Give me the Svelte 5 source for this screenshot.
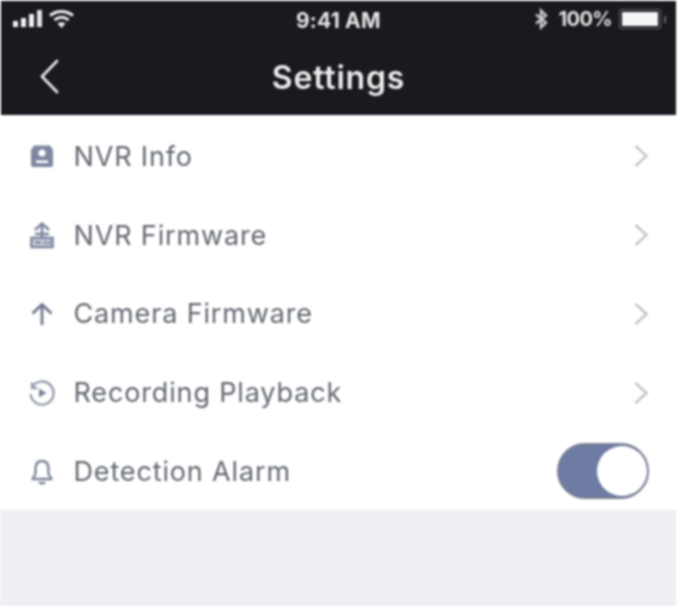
<script>
  const rows = [
    { label: 'NVR Info', icon: 'info' },
    { label: 'NVR Firmware', icon: 'firmware' },
    { label: 'Camera Firmware', icon: 'up' },
    { label: 'Recording Playback', icon: 'playback' },
    { label: 'Detection Alarm', icon: 'bell' }
  ];
</script>

<div class="screen">
  <header class="header">
    <div class="status">
      <div class="status-left">
        <svg width="31" height="18" viewBox="0 0 31 18">
          <rect x="0" y="11" width="5" height="6" fill="#f2f2f2"/>
          <rect x="8" y="8" width="5" height="9" fill="#f2f2f2"/>
          <rect x="16" y="4" width="5" height="13" fill="#f2f2f2"/>
          <rect x="24" y="0" width="5" height="17" fill="#e4e4e4"/>
        </svg>
        <svg class="wifi" width="29" height="20" viewBox="0 0 29 20" fill="none" stroke="#eee" stroke-width="3">
          <path d="M2 6.5 C9 1 18 1 25 6.5"/>
          <path d="M6.5 11 C11 7.5 16 7.5 20.5 11"/>
          <path d="M13.5 19 L9.5 14.5 C12 12.8 15 12.8 17.5 14.5 Z" fill="#eee" stroke="none"/>
        </svg>
      </div>
      <span class="time">9:41 AM</span>
      <div class="status-right">
        <svg width="14" height="22" viewBox="0 0 14 22" fill="none" stroke="#ccc" stroke-width="2.4">
          <path d="M2 6.5 L12 14.5 L7 19.5 V2.5 L12 7.5 L2 15.5"/>
        </svg>
        <span class="pct">100%</span>
        <div class="battery"><div class="fill"></div></div>
        <div class="nub"></div>
      </div>
    </div>
    <div class="nav">
      <svg class="back" width="22" height="36" viewBox="0 0 22 36" fill="none" stroke="#e8e8e8" stroke-width="2.8" stroke-linecap="round" stroke-linejoin="round">
        <path d="M18 2 L3 17.5 L18 33"/>
      </svg>
      <h1>Settings</h1>
    </div>
  </header>

  <main class="list">
    {#each rows as row}
      <div class="row">
        <span class="icon">
          {#if row.icon === 'info'}
            <svg width="26" height="26" viewBox="0 0 26 26">
              <path fill-rule="evenodd" fill="#7d879f" d="M5 2.5 H21 L24 7 V22 Q24 24 22 24 H4 Q2 24 2 22 V7 Z M13 6.5 A3.5 3.5 0 1 0 13 13.5 A3.5 3.5 0 1 0 13 6.5 Z M7 17.5 V20 H19 V17.5 Z"/>
            </svg>
          {:else if row.icon === 'firmware'}
            <svg width="26" height="28" viewBox="0 0 26 28" fill="none" stroke="#7d879f" stroke-width="2.6">
              <path d="M6 9 L13 2.5 L20 9"/>
              <path d="M13 3 V18"/>
              <path d="M6 13 H20"/>
              <rect x="2.5" y="17" width="21" height="9" fill="#cfd3dd"/>
              <path d="M6 21.5 H12 M16 20 V23 M20 20 V23" stroke="#7d879f"/>
            </svg>
          {:else if row.icon === 'up'}
            <svg width="26" height="26" viewBox="0 0 26 26" fill="none" stroke="#6f7990" stroke-width="2.8">
              <path d="M3.5 12.5 L13 3.5 L22.5 12.5"/>
              <path d="M13 4 V24"/>
            </svg>
          {:else if row.icon === 'playback'}
            <svg width="28" height="28" viewBox="0 0 28 28" fill="none" stroke="#969dae" stroke-width="2.4">
              <path d="M4 8.5 A11.5 11.5 0 1 1 2.6 15"/>
              <path d="M4 3.5 V9 H9.5"/>
              <path d="M11 9.5 L18.5 14 L11 18.5 Z" fill="#7d859c" stroke="none"/>
            </svg>
          {:else}
            <svg width="24" height="28" viewBox="0 0 24 28" fill="none" stroke="#7d8598" stroke-width="2.4" stroke-linejoin="round">
              <path d="M12 3 C7 3 5.5 7 5.5 11 V16 L2.5 21 H21.5 L18.5 16 V11 C18.5 7 17 3 12 3 Z"/>
              <path d="M9 24 Q12 27 15 24"/>
            </svg>
          {/if}
        </span>
        <span class="label">{row.label}</span>
        {#if row.icon === 'bell'}
          <div class="toggle"><div class="knob"></div></div>
        {:else}
          <svg class="chev" width="16" height="24" viewBox="0 0 16 24" fill="none" stroke="#c2c4c9" stroke-width="2.4">
            <path d="M2.5 2 L13.5 12 L2.5 22"/>
          </svg>
        {/if}
      </div>
    {/each}
  </main>
  <div class="footer"></div>
</div>

<style>
  :global(body) {
    margin: 0;
    background: #fff;
  }
  .screen {
    width: 684px;
    height: 606px;
    overflow: hidden;
    background: #fff;
    font-family: "Liberation Sans", Arial, sans-serif;
    display: flex;
    flex-direction: column;
    padding-right: 8px;
    box-sizing: border-box;
    filter: blur(0.9px);
  }
  .header {
    margin: 1px 0 0 1px;
    height: 114px;
    background: #19191f;
    color: #f0f0f0;
    flex: none;
  }
  .status {
    height: 36px;
    padding: 0 10px 0 12px;
    display: flex;
    align-items: center;
    justify-content: space-between;
    position: relative;
  }
  .status-left, .status-right {
    display: flex;
    align-items: center;
  }
  .wifi {
    margin-left: 4px;
  }
  .time {
    position: absolute;
    left: 295px;
    top: 7px;
    font-family: Inter, sans-serif;
    font-size: 21px;
    font-weight: 700;
    letter-spacing: 0.2px;
    color: #e6e6e6;
  }
  .pct {
    font-family: Inter, sans-serif;
    font-size: 20px;
    font-weight: 700;
    color: #e0e0e0;
    margin-left: 10px;
    letter-spacing: -0.6px;
  }
  .battery {
    width: 42px;
    height: 20px;
    margin-left: 7px;
    border: 1px solid #6a6a6e;
    box-sizing: border-box;
    padding: 2px;
    border-radius: 2px;
  }
  .fill {
    background: #f4f4f4;
    height: 100%;
  }
  .nub {
    width: 2px;
    height: 7px;
    background: #666;
    margin-left: 3px;
  }
  .nav {
    position: relative;
    height: 78px;
    display: flex;
    align-items: center;
    justify-content: center;
  }
  .back {
    position: absolute;
    left: 38px;
    top: 22px;
  }
  h1 {
    margin: 3px 0 0;
    font-family: Inter, sans-serif;
    font-size: 32px;
    font-weight: 600;
    letter-spacing: 0.8px;
    color: #ececec;
  }
  .list {
    padding-top: 2px;
    height: 393px;
    flex: none;
    display: flex;
    flex-direction: column;
  }
  .row {
    height: 78.8px;
    flex: none;
    display: flex;
    align-items: center;
    padding-left: 28px;
    padding-right: 27px;
  }
  .icon {
    width: 28px;
    display: flex;
    justify-content: center;
    margin-right: 17.5px;
  }
  .label {
    flex: 1;
    font-family: Inter, sans-serif;
    font-size: 27px;
    letter-spacing: 0.85px;
    color: #626770;
  }
  .toggle {
    width: 92px;
    height: 56px;
    margin-top: -2px;
    border-radius: 28px;
    background: #6e7ca3;
    position: relative;
    box-sizing: border-box;
    border: 2px solid #7b8093;
  }
  .knob {
    position: absolute;
    right: 0;
    top: 0;
    width: 50px;
    height: 50px;
    margin: 1px 0;
    border-radius: 50%;
    background: #fff;
  }
  .footer {
    flex: 1;
    background: #eeeef4;
  }
</style>
